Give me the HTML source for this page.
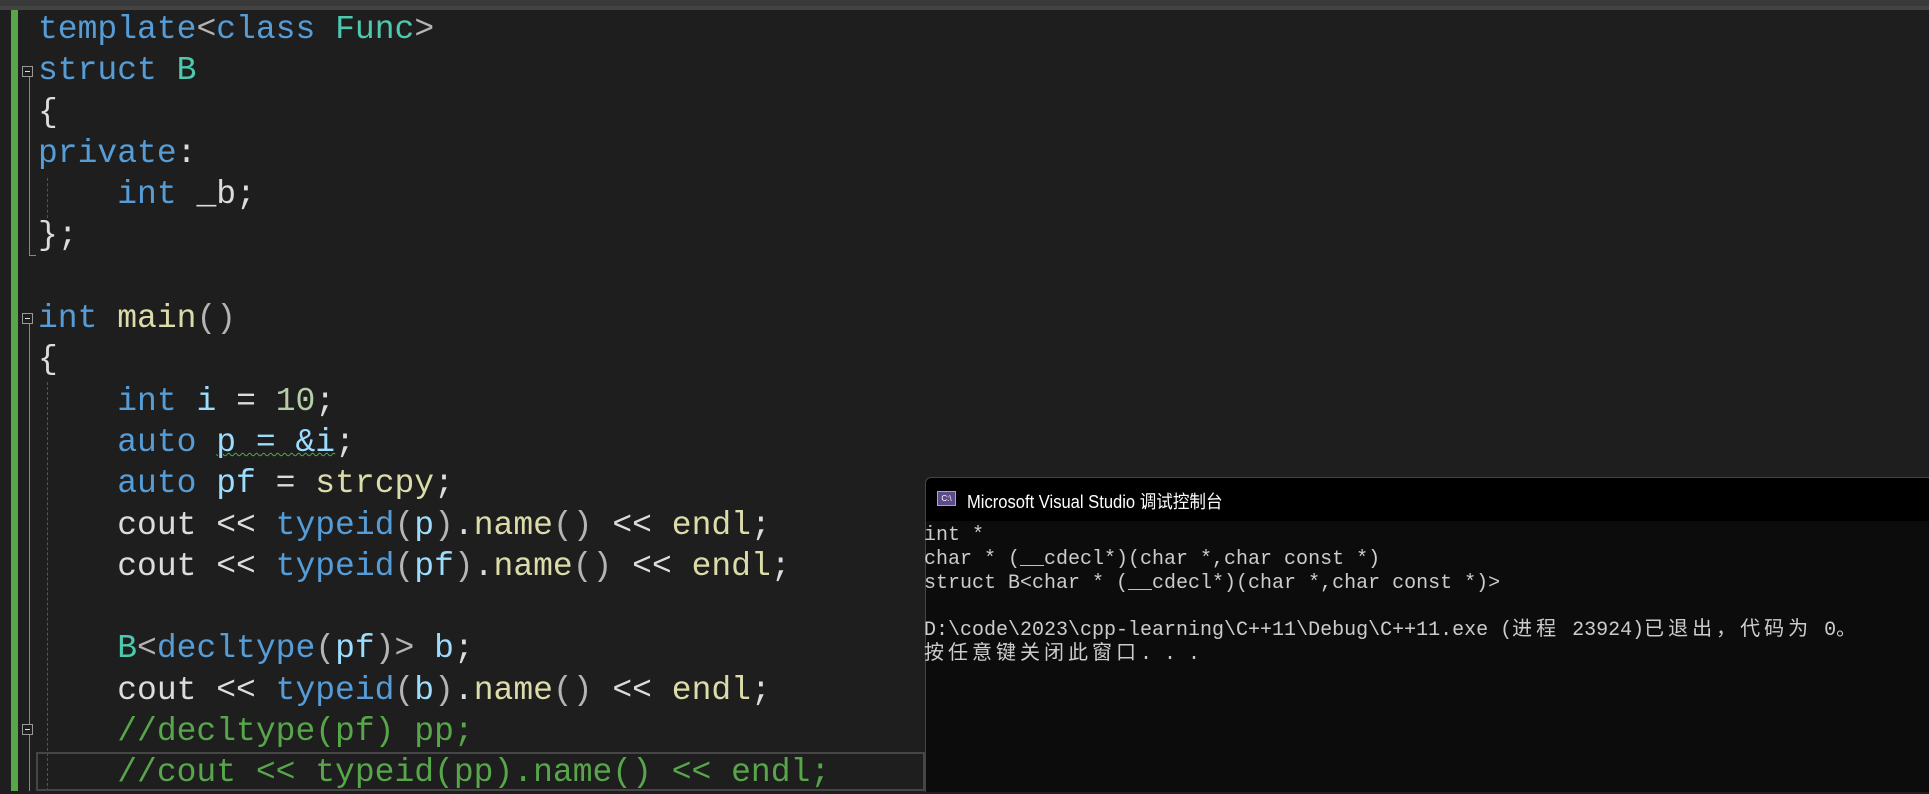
<!DOCTYPE html>
<html><head><meta charset="utf-8"><style>
body{margin:0;width:1929px;height:791px;background:#1e1e1e;overflow:hidden;position:relative;font-family:"Liberation Mono",monospace}
.top{position:absolute;left:0;top:0;width:1929px;height:6px;background:#3a3a3a}
.top2{position:absolute;left:0;top:6px;width:1929px;height:4px;background:#444}
.green{position:absolute;left:11px;top:10px;width:7px;height:781px;background:#57a64a}
.code{position:absolute;left:38px;top:9px;font-size:33px;line-height:41.3px;color:#dcdcdc;white-space:pre}
.k{color:#569cd6}.t{color:#4ec9b0}.f{color:#dcdcaa}.v{color:#9cdcfe}.n{color:#b5cea8}.c{color:#57a64a}.g{color:#b4b4b4}
.fold{position:absolute;width:9px;height:9px;border:1px solid #999;background:#1e1e1e}
.fold:after{content:"";position:absolute;left:2px;top:4px;width:5px;height:1px;background:#ddd}
.vl{position:absolute;width:1px;background:#888}
.dl{position:absolute;width:0;border-left:1px dashed #555}
.cur{position:absolute;left:36px;top:752px;width:889px;height:39px;border:2px solid #464646;box-sizing:border-box}
.con{position:absolute;left:925px;top:477px;width:1004px;height:314px;background:#0c0c0c;border-left:1px solid #444;border-top:1px solid #444;border-top-left-radius:6px}
.tb{position:absolute;left:0;top:0;width:100%;height:43px;background:#000;border-top-left-radius:6px}
.ttl{position:absolute;left:41px;top:10px;font-family:"Liberation Sans","Noto Sans CJK SC",sans-serif;font-size:18px;color:#fff;transform:scaleX(0.92);transform-origin:left}
.ic{position:absolute;left:11px;top:13px;width:19px;height:15px;background:#5c4a8a;border:1px solid #aaa;box-sizing:border-box;font:8px "Liberation Sans",sans-serif;color:#fff;text-align:center;line-height:13px}
.ct{position:absolute;left:-2px;top:46px;font-family:"Liberation Mono","Noto Sans CJK SC",monospace;font-size:20px;line-height:23.8px;color:#cccccc;white-space:pre}
.cj{letter-spacing:4px}
</style></head><body>
<div class="top"></div><div class="top2"></div>
<div class="green"></div>
<div class="fold" style="left:22px;top:66px"></div>
<div class="vl" style="left:29px;top:77px;height:179px"></div>
<div class="vl" style="left:29px;top:255px;width:7px;height:1px"></div>
<div class="fold" style="left:22px;top:313px"></div>
<div class="vl" style="left:29px;top:324px;height:467px"></div>
<div class="dl" style="left:47px;top:178px;height:40px"></div>
<div class="dl" style="left:47px;top:382px;height:409px"></div>
<div class="fold" style="left:22px;top:724px;z-index:2"></div>
<div class="cur"></div>
<div class="code"><span class="k">template</span><span class="g">&lt;</span><span class="k">class</span> <span class="t">Func</span><span class="g">&gt;</span>
<span class="k">struct</span> <span class="t">B</span>
{
<span class="k">private</span>:
    <span class="k">int</span> _b;
};

<span class="k">int</span> <span class="f">main</span><span class="g">()</span>
{
    <span class="k">int</span> <span class="v">i</span> = <span class="n">10</span>;
    <span class="k">auto</span> <span class="v" style="text-decoration:underline wavy #57a64a;text-decoration-thickness:1px">p = &amp;i</span>;
    <span class="k">auto</span> <span class="v">pf</span> = <span class="f">strcpy</span>;
    cout &lt;&lt; <span class="k">typeid</span><span class="g">(</span><span class="v">p</span><span class="g">)</span>.<span class="f">name</span><span class="g">()</span> &lt;&lt; <span class="f">endl</span>;
    cout &lt;&lt; <span class="k">typeid</span><span class="g">(</span><span class="v">pf</span><span class="g">)</span>.<span class="f">name</span><span class="g">()</span> &lt;&lt; <span class="f">endl</span>;

    <span class="t">B</span><span class="g">&lt;</span><span class="k">decltype</span><span class="g">(</span><span class="v">pf</span><span class="g">)&gt;</span> <span class="v">b</span>;
    cout &lt;&lt; <span class="k">typeid</span><span class="g">(</span><span class="v">b</span><span class="g">)</span>.<span class="f">name</span><span class="g">()</span> &lt;&lt; <span class="f">endl</span>;
    <span class="c">//decltype(pf) pp;</span>
    <span class="c">//cout &lt;&lt; typeid(pp).name() &lt;&lt; endl;</span></div>
<div class="con">
<div class="tb"><div class="ic">C:\</div><div class="ttl">Microsoft Visual Studio 调试控制台</div></div>
<div class="ct">int *
char * (__cdecl*)(char *,char const *)
struct B&lt;char * (__cdecl*)(char *,char const *)&gt;

D:\code\2023\cpp-learning\C++11\Debug\C++11.exe (<span class="cj">进程</span> 23924)<span class="cj">已退出，代码为</span> 0<span class="cj">。</span>
<span class="cj">按任意键关闭此窗口</span>. . .</div>
</div>
</body></html>
